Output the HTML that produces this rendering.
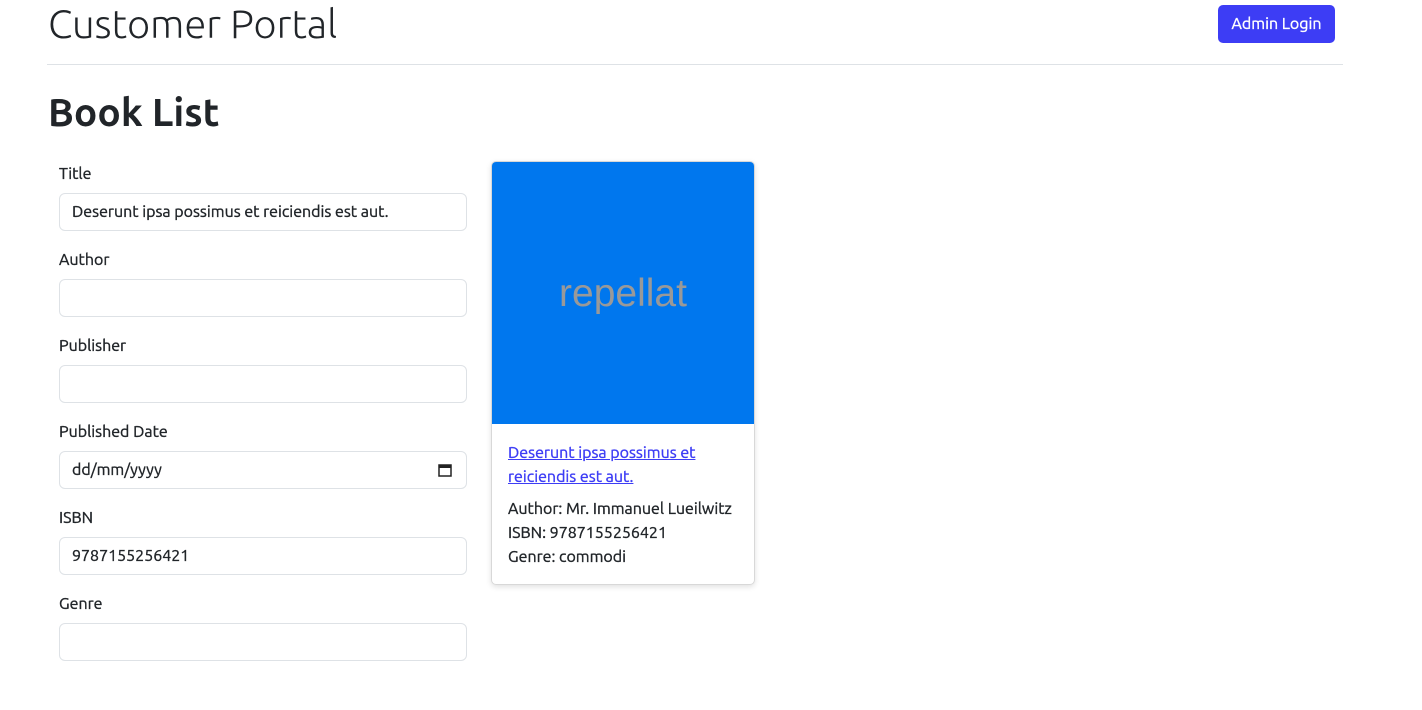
<!DOCTYPE html>
<html><head><style>
body{margin:0;font-family:"Ubuntu","Liberation Sans",sans-serif;color:#212529;background:#fff;font-size:16px}
.t{-webkit-text-stroke:0.35px currentColor}
.h{position:absolute;left:48px;top:0;font-size:40px;font-weight:300;line-height:48px}
.btn{position:absolute;left:1218px;top:5px;width:117px;height:38px;background:#3d3df5;color:#fff;border-radius:5px;font-size:16px;line-height:38px;text-align:center}
.hr{position:absolute;left:47px;top:64px;width:1296px;height:1px;background:#dee2e6}
.bl{position:absolute;left:48px;top:88px;font-size:39px;font-weight:700;line-height:50px}
.lab{position:absolute;left:59px;font-size:16px;line-height:24px}
.inp{position:absolute;left:59px;width:406px;height:36px;border:1px solid #dee2e6;border-radius:6px;box-sizing:content-box;font-size:16px;line-height:36px;padding:0;}
.inp span{margin-left:12px}
.card{position:absolute;left:491px;top:161px;width:262px;height:422px;border:1px solid #d8d8d8;border-radius:5px;box-shadow:0 2px 6px rgba(0,0,0,.12);overflow:hidden}
.img{height:262px;background:#0077ee;color:#999;font-family:"Liberation Sans",sans-serif;font-size:39px;text-align:center;line-height:264px}
.body{padding:17px 16px 0 16px;line-height:24px}
.body a{color:#3d3df5;text-decoration:underline}
</style></head><body>
<div class="h">Customer Portal</div>
<div class="btn t">Admin Login</div>
<div class="hr"></div>
<div class="bl">Book List</div>
<div class="lab t" style="top:162px">Title</div>
<div class="inp t" style="top:193px"><span>Deserunt ipsa possimus et reiciendis est aut.</span></div>
<div class="lab t" style="top:248px">Author</div>
<div class="inp" style="top:279px"></div>
<div class="lab t" style="top:334px">Publisher</div>
<div class="inp" style="top:365px"></div>
<div class="lab t" style="top:420px">Published Date</div>
<div class="inp t" style="top:451px"><span>dd/mm/yyyy</span>
<svg style="position:absolute;right:14px;top:11px" width="14" height="14" viewBox="0 0 14 14"><rect x="1" y="2" width="12" height="11" fill="none" stroke="#222" stroke-width="1.5"/><rect x="1" y="2" width="12" height="3" fill="#222"/></svg></div>
<div class="lab t" style="top:506px">ISBN</div>
<div class="inp t" style="top:537px"><span>9787155256421</span></div>
<div class="lab t" style="top:592px">Genre</div>
<div class="inp" style="top:623px"></div>
<div class="card">
<div class="img">repellat</div>
<div class="body t"><a>Deserunt ipsa possimus et reiciendis est aut.</a>
<div style="margin-top:8px">Author: Mr. Immanuel Lueilwitz<br>ISBN: 9787155256421<br>Genre: commodi</div></div>
</div>
</body></html>
